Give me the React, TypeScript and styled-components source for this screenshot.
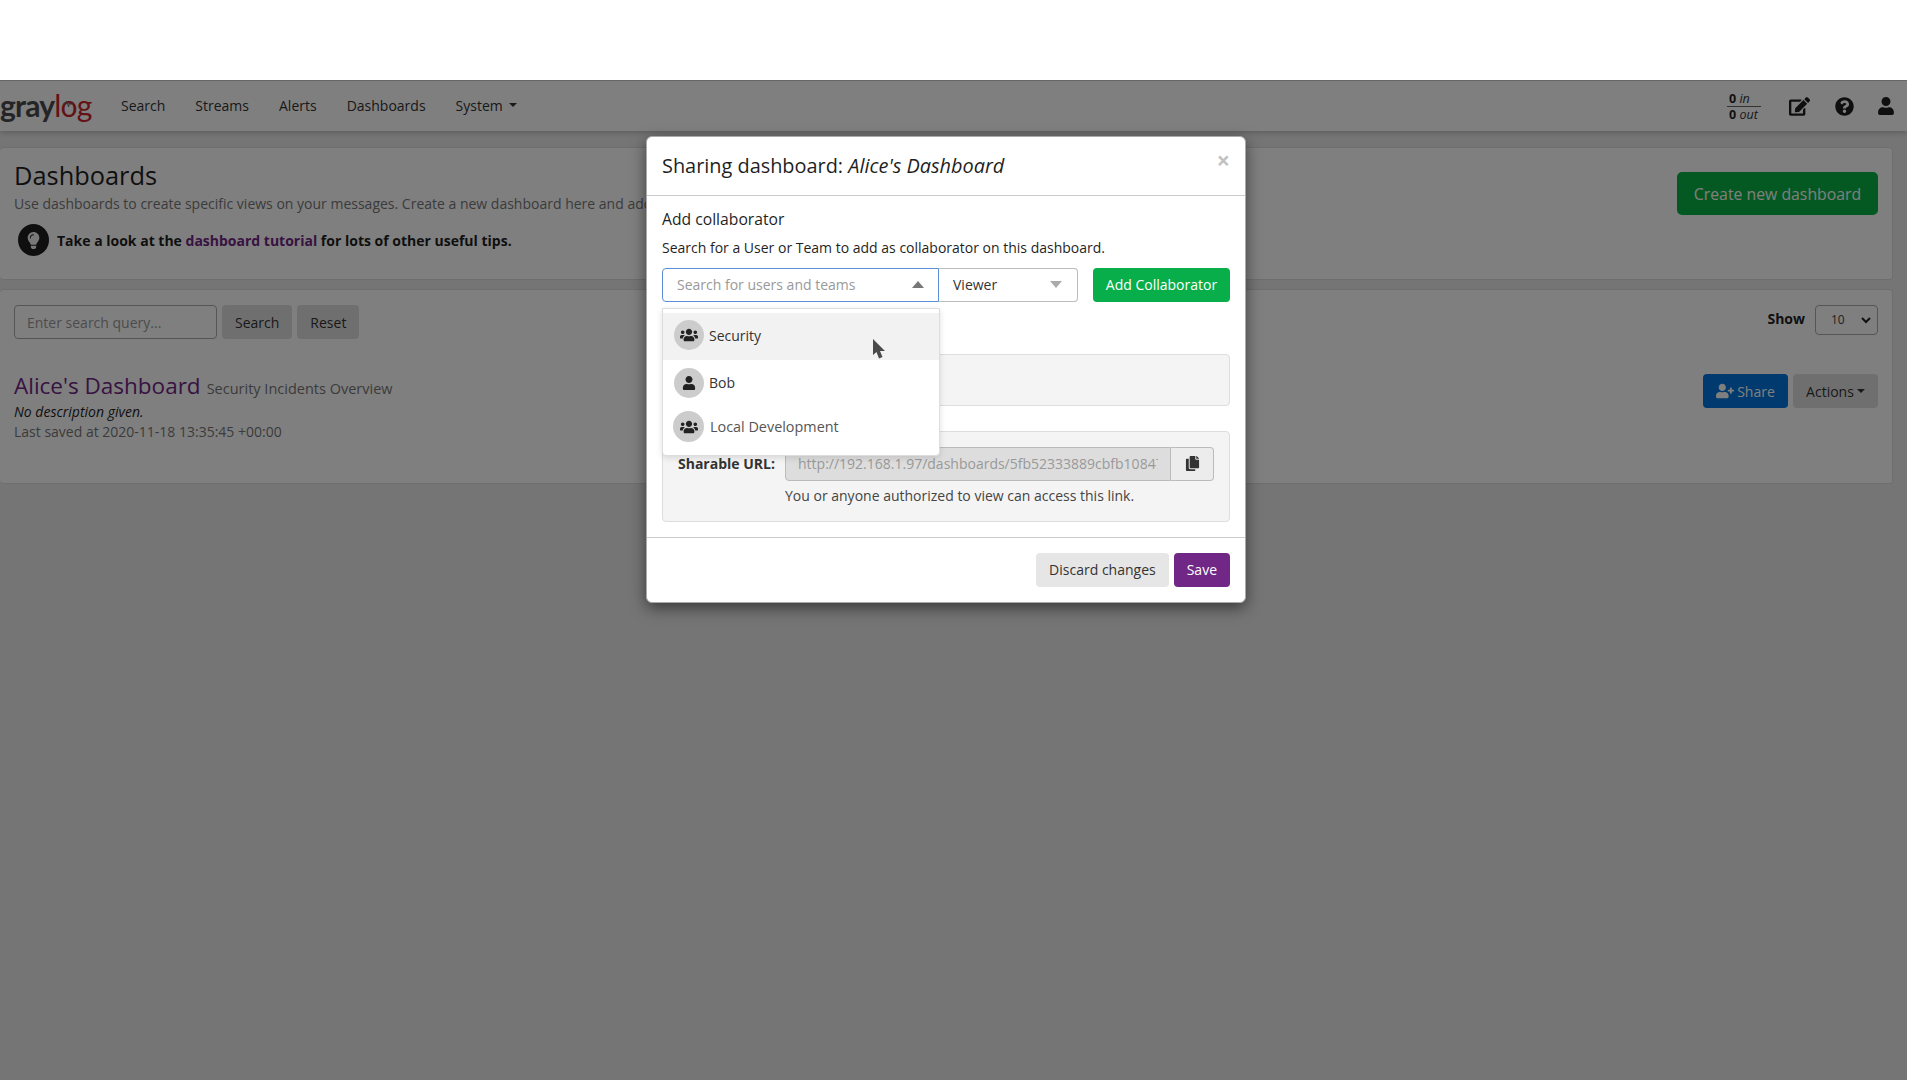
import React from "react";
import styled, { createGlobalStyle } from "styled-components";
import {
  FaCopy,
  FaEdit,
  FaLightbulb,
  FaQuestionCircle,
  FaUser,
  FaUserPlus,
  FaUsers,
} from "react-icons/fa";

const GlobalStyle = createGlobalStyle`
  html, body {
    margin: 0;
    padding: 0;
    background: #fff;
    overflow: hidden;
  }
  body {
    font-family: "Open Sans", "Liberation Sans", sans-serif;
    font-size: 14px;
    color: #1f1f1f;
  }
  * {
    box-sizing: border-box;
  }
`;

const Screen = styled.div`
  width: 1920px;
  height: 1080px;
  padding-top: 80px;
  background: #fff;
`;

const Frame = styled.div`
  position: relative;
  width: 1907px;
  height: 1000px;
  overflow: hidden;
  background: #ebebeb;
`;

const Navbar = styled.nav`
  height: 51px;
  display: flex;
  align-items: center;
  background: #fff;
  border-top: 1px solid #ccc;
  box-shadow: 0 2px 5px rgba(0, 0, 0, 0.2);
  color: #333;
`;

const Logo = styled.div`
  position: relative;
  width: 121px;
  padding-bottom: 2px;
  font-family: "Lato", sans-serif;
  font-size: 30px;
  line-height: 30px;
  letter-spacing: -0.8px;
  font-weight: 700;
  color: #4a4a4a;

  span {
    font-weight: 400;
    color: #c9252c;
  }
`;

const LogoWave = styled.svg`
  position: absolute;
  top: 9px;
  left: 63px;
`;

const NavLinks = styled.div`
  display: flex;
  gap: 30px;
  padding-bottom: 2px;
`;

const NavLink = styled.a`
  display: flex;
  align-items: center;
  gap: 6px;
`;

const Caret = styled.i`
  width: 0;
  height: 0;
  border-top: 4px solid currentColor;
  border-left: 4px solid transparent;
  border-right: 4px solid transparent;
`;

const NavRight = styled.div`
  margin-left: auto;
  display: flex;
  align-items: center;
  padding-right: 12px;
  color: #1f1f1f;
`;

const Throughput = styled.div`
  width: 34px;
  margin-right: 28px;
  font-size: 12.5px;
  line-height: 15px;
  padding-left: 2px;

  b {
    font-weight: 700;
  }
  em {
    color: #333;
  }
  div + div {
    border-top: 1px solid #666;
    margin-left: -2px;
    padding-left: 2px;
  }
`;

const NavIcon = styled.span<{ $gap: number; $size: number }>`
  display: flex;
  margin-right: ${({ $gap }) => $gap}px;
  font-size: ${({ $size }) => $size}px;
`;

const Content = styled.main`
  padding: 16px 14px 0 0;
  display: flex;
  flex-direction: column;
  gap: 9px;
`;

const Panel = styled.section<{ $height: number }>`
  height: ${({ $height }) => $height}px;
  padding: 0 14px;
  background: #fff;
  border: 1px solid #ddd;
  border-left: 0;
  border-radius: 4px;
`;

const HeaderRow = styled.div`
  display: flex;
  justify-content: space-between;
`;

const Title = styled.h1`
  margin: 10px 0 0;
  font-size: 25.4px;
  line-height: 34px;
  font-weight: 400;
`;

const Lead = styled.p`
  margin: 2px 0 0;
  line-height: 19px;
  color: #777;
`;

const Tip = styled.div`
  margin: 11px 0 0 4px;
  display: flex;
  align-items: center;
  gap: 8px;
  font-weight: 700;

  a {
    color: #702785;
  }
`;

const TipBadge = styled.span`
  width: 31px;
  height: 32px;
  display: flex;
  align-items: center;
  justify-content: center;
  border-radius: 50%;
  background: #1f1f1f;
  color: #f0f0f0;
  font-size: 17px;
`;

const CreateButton = styled.button`
  margin-top: 24px;
  width: 201px;
  height: 43px;
  border: 0;
  border-radius: 5px;
  background: #07b343;
  color: #fff;
  font: 400 15.8px "Open Sans", sans-serif;
`;

const SearchRow = styled.div`
  padding-top: 15px;
  display: flex;
  justify-content: space-between;
`;

const SearchForm = styled.div`
  display: flex;
  gap: 5px;
`;

const SearchInput = styled.div`
  width: 203px;
  height: 34px;
  padding-left: 12px;
  display: flex;
  align-items: center;
  border: 1px solid #aaa;
  border-radius: 4px;
  color: #999;
`;

const Button = styled.button<{ $kind?: "default" | "light" | "primary" | "blue" | "green" }>`
  height: 34px;
  padding: 0 13px;
  display: inline-flex;
  align-items: center;
  justify-content: center;
  gap: 5px;
  border: 0;
  border-radius: 4px;
  font: 400 14px "Open Sans", sans-serif;
  white-space: nowrap;
  color: ${({ $kind }) => ($kind && $kind !== "default" && $kind !== "light" ? "#fff" : "#333")};
  background: ${({ $kind }) =>
    $kind === "primary"
      ? "#702785"
      : $kind === "blue"
        ? "#0074dc"
        : $kind === "green"
          ? "#07ae4a"
          : $kind === "light"
            ? "#e6e6e6"
            : "#dfdfdf"};
`;

const ShareButton = styled(Button)`
  width: 85px;
  padding: 0;
  gap: 3px;

  svg {
    font-size: 18px;
  }
`;

const ActionsButton = styled(Button)`
  width: 85px;
  padding: 0;
  gap: 3px;
`;

const ShowControl = styled.div`
  display: flex;
  align-items: flex-start;
  gap: 10px;
  font-weight: 700;
  line-height: 28px;
`;

const PageSize = styled.div`
  width: 63px;
  height: 30px;
  padding: 0 6px 0 15px;
  display: flex;
  align-items: center;
  justify-content: space-between;
  border: 1px solid #aaa;
  border-radius: 4px;
  font-size: 12px;
  font-weight: 400;
  color: #444;

  svg {
    width: 10px;
    height: 10px;
  }
`;

const DashboardRow = styled.div`
  margin-top: 35px;
  display: flex;
  justify-content: space-between;
`;

const DashboardInfo = styled.div`
  margin-top: -3px;
`;

const DashboardTitle = styled.div`
  display: flex;
  align-items: baseline;
  gap: 6px;
  height: 31px;
  line-height: 30px;
  font-size: 14.5px;
  color: #777;

  a {
    font-size: 22.5px;
    color: #702785;
  }
`;

const Description = styled.div`
  line-height: 20px;
  font-style: italic;
`;

const Saved = styled.div`
  line-height: 20px;
  color: #777;
`;

const RowActions = styled.div`
  display: flex;
  gap: 5px;
`;

const Backdrop = styled.div`
  position: absolute;
  inset: 0;
  background: rgba(0, 0, 0, 0.5);
`;

const Modal = styled.div`
  position: absolute;
  top: 56px;
  left: 646px;
  width: 600px;
  height: 467px;
  display: flex;
  flex-direction: column;
  background: #fff;
  border: 1px solid #aaa;
  border-radius: 6px;
  box-shadow: 0 5px 15px rgba(0, 0, 0, 0.5);
`;

const ModalHeader = styled.header`
  height: 60px;
  padding: 0 15px;
  display: flex;
  justify-content: space-between;
  border-bottom: 1px solid #ccc;
`;

const ModalTitle = styled.h2`
  margin: 15px 0 0;
  font-size: 19.9px;
  line-height: 28px;
  font-weight: 400;

  em {
    font-style: italic;
  }
`;

const Close = styled.span`
  margin: 10px 0 0 0;
  font-size: 23px;
  line-height: 26px;
  font-weight: 700;
  color: #c2c2c2;
`;

const ModalBody = styled.div`
  position: relative;
  flex: 1;
  padding: 12px 15px 0;
  display: flex;
  flex-direction: column;
`;

const SectionTitle = styled.div`
  font-size: 15.7px;
  line-height: 22px;
`;

const SectionText = styled.div`
  margin-top: 8px;
  line-height: 20px;
`;

const SelectionRow = styled.div`
  margin-top: 10px;
  display: flex;
`;

const SelectBox = styled.div<{ $focused?: boolean; $width: number }>`
  width: ${({ $width }) => $width}px;
  height: 34px;
  padding: 0 14px;
  display: flex;
  align-items: center;
  justify-content: space-between;
  border: 1px solid ${({ $focused }) => ($focused ? "#5b8fd6" : "#bbb")};
  border-left-width: ${({ $focused }) => ($focused ? 1 : 0)}px;
  border-radius: ${({ $focused }) => ($focused ? "4px 0 0 4px" : "0 4px 4px 0")};
  color: ${({ $focused }) => ($focused ? "#999" : "#333")};
`;

const SelectCaret = styled.i<{ $up?: boolean }>`
  width: 0;
  height: 0;
  margin-right: ${({ $up }) => ($up ? 0 : 1)}px;
  border-left: 6px solid transparent;
  border-right: 6px solid transparent;
  border-top: ${({ $up }) => ($up ? "0" : "7px solid #aaa")};
  border-bottom: ${({ $up }) => ($up ? "7px solid #777" : "0")};
`;

const AddButton = styled(Button)`
  margin-left: 15px;
  width: 137px;
  padding: 0;
`;

const Well = styled.div<{ $height: number; $top: number }>`
  height: ${({ $height }) => $height}px;
  margin-top: ${({ $top }) => $top}px;
  background: #f4f4f4;
  border: 1px solid #ddd;
  border-radius: 4px;
`;

const UrlRow = styled.div`
  padding: 15px 13px 0 15px;
  display: flex;
  align-items: center;
`;

const UrlLabel = styled.label`
  width: 107px;
  font-weight: 700;
  color: #333;
`;

const UrlInput = styled.div`
  width: 386px;
  height: 34px;
  padding: 0 12px;
  display: flex;
  align-items: center;
  background: #ddd;
  border: 1px solid #bbb;
  border-radius: 4px 0 0 4px;
  color: #999;
`;

const UrlValue = styled.span`
  flex: 1;
  overflow: hidden;
  white-space: nowrap;
`;

const CopyButton = styled.span`
  width: 43px;
  height: 34px;
  display: flex;
  align-items: center;
  justify-content: center;
  background: #ececec;
  border: 1px solid #bbb;
  border-left: 0;
  border-radius: 0 4px 4px 0;
  color: #333;
  font-size: 15px;
`;

const UrlHelp = styled.div`
  margin: 5px 0 0 122px;
  line-height: 20px;
  color: #444;
`;

const ModalFooter = styled.footer`
  margin-top: 15px;
  padding: 15px 15px 0;
  height: 66px;
  display: flex;
  justify-content: flex-end;
  gap: 5px;
  border-top: 1px solid #ccc;
`;

const Dropdown = styled.div`
  position: absolute;
  top: 112px;
  left: 15px;
  width: 278px;
  height: 148px;
  padding-top: 4px;
  background: #fff;
  border: 1px solid #ddd;
  border-radius: 0 0 4px 4px;
  box-shadow: 0 2px 6px rgba(0, 0, 0, 0.12);
`;

const Option = styled.div<{ $active?: boolean; $height: number; $faded?: boolean }>`
  height: ${({ $height }) => $height}px;
  padding-left: ${({ $faded }) => ($faded ? 10 : 11)}px;
  padding-bottom: ${({ $active }) => ($active ? 2 : 0)}px;
  display: flex;
  align-items: center;
  gap: ${({ $faded }) => ($faded ? 6 : 5)}px;
  background: ${({ $active }) => ($active ? "#f2f2f2" : "#fff")};
  color: ${({ $faded }) => ($faded ? "#555" : "#333")};
  font-size: ${({ $faded }) => ($faded ? 14.4 : 14)}px;
`;

const Avatar = styled.span<{ $team: boolean; $faded?: boolean }>`
  width: ${({ $faded }) => ($faded ? 31 : 30)}px;
  height: ${({ $faded }) => ($faded ? 31 : 30)}px;
  display: flex;
  align-items: center;
  justify-content: center;
  border-radius: 50%;
  background: #ccc;
  color: #222;
  font-size: ${({ $team }) => ($team ? 18 : 14)}px;
`;

const Cursor = styled.svg`
  position: absolute;
  top: 143px;
  left: 226px;
`;

const options = [
  { name: "Security", team: true, height: 47, active: true, faded: false },
  { name: "Bob", team: false, height: 46, active: false, faded: false },
  { name: "Local Development", team: true, height: 42, active: false, faded: true },
];

const App = () => {
  return (
    <Screen>
      <GlobalStyle />
      <Frame>
        <Navbar>
          <Logo>
            gray<span>log</span>
            <LogoWave width="10" height="10" viewBox="0 0 10 10">
              <path d="M0 5h3l1-3 1.500 6 1-4 .5 1h2.500" fill="none" stroke="#666" strokeWidth="1" />
            </LogoWave>
          </Logo>
          <NavLinks>
            <NavLink>Search</NavLink>
            <NavLink>Streams</NavLink>
            <NavLink>Alerts</NavLink>
            <NavLink>Dashboards</NavLink>
            <NavLink>
              System <Caret />
            </NavLink>
          </NavLinks>
          <NavRight>
            <Throughput>
              <div>
                <b>0</b> <em>in</em>
              </div>
              <div>
                <b>0</b> <em>out</em>
              </div>
            </Throughput>
            <NavIcon $gap={25} $size={21}>
              <FaEdit />
            </NavIcon>
            <NavIcon $gap={23} $size={19}>
              <FaQuestionCircle />
            </NavIcon>
            <NavIcon $gap={0} $size={18}>
              <FaUser />
            </NavIcon>
          </NavRight>
        </Navbar>

        <Content>
          <Panel $height={133}>
            <HeaderRow>
              <div>
                <Title>Dashboards</Title>
                <Lead>
                  Use dashboards to create specific views on your messages. Create a new dashboard
                  here and add
                </Lead>
                <Tip>
                  <TipBadge>
                    <FaLightbulb />
                  </TipBadge>
                  <span>
                    Take a look at the <a>dashboard tutorial</a> for lots of other useful tips.
                  </span>
                </Tip>
              </div>
              <CreateButton>Create new dashboard</CreateButton>
            </HeaderRow>
          </Panel>

          <Panel $height={195}>
            <SearchRow>
              <SearchForm>
                <SearchInput>Enter search query...</SearchInput>
                <Button>Search</Button>
                <Button>Reset</Button>
              </SearchForm>
              <ShowControl>
                Show
                <PageSize>
                  10
                  <svg viewBox="0 0 10 10">
                    <path d="M1 3l4 4 4-4" fill="none" stroke="#222" strokeWidth="2" />
                  </svg>
                </PageSize>
              </ShowControl>
            </SearchRow>
            <DashboardRow>
              <DashboardInfo>
                <DashboardTitle>
                  <a>Alice's Dashboard</a>
                  <span>Security Incidents Overview</span>
                </DashboardTitle>
                <Description>No description given.</Description>
                <Saved>Last saved at 2020-11-18 13:35:45 +00:00</Saved>
              </DashboardInfo>
              <RowActions>
                <ShareButton $kind="blue">
                  <FaUserPlus />
                  Share
                </ShareButton>
                <ActionsButton>
                  Actions <Caret />
                </ActionsButton>
              </RowActions>
            </DashboardRow>
          </Panel>
        </Content>

        <Backdrop />

        <Modal>
          <ModalHeader>
            <ModalTitle>
              Sharing dashboard: <em>Alice's Dashboard</em>
            </ModalTitle>
            <Close>×</Close>
          </ModalHeader>
          <ModalBody>
            <SectionTitle>Add collaborator</SectionTitle>
            <SectionText>Search for a User or Team to add as collaborator on this dashboard.</SectionText>
            <SelectionRow>
              <SelectBox $focused $width={277}>
                Search for users and teams
                <SelectCaret $up />
              </SelectBox>
              <SelectBox $width={139}>
                Viewer
                <SelectCaret />
              </SelectBox>
              <AddButton $kind="green">Add Collaborator</AddButton>
            </SelectionRow>
            <Well $height={52} $top={52} />
            <Well $height={91} $top={25}>
              <UrlRow>
                <UrlLabel>Sharable URL:</UrlLabel>
                <UrlInput>
                  <UrlValue>http://192.168.1.97/dashboards/5fb52333889cbfb10847</UrlValue>
                </UrlInput>
                <CopyButton>
                  <FaCopy />
                </CopyButton>
              </UrlRow>
              <UrlHelp>You or anyone authorized to view can access this link.</UrlHelp>
            </Well>
            <Dropdown>
              {options.map((option) => (
                <Option
                  key={option.name}
                  $active={option.active}
                  $height={option.height}
                  $faded={option.faded}
                >
                  <Avatar $team={option.team} $faded={option.faded}>
                    {option.team ? <FaUsers /> : <FaUser />}
                  </Avatar>
                  {option.name}
                </Option>
              ))}
            </Dropdown>
            <Cursor width="12" height="21" viewBox="0 0 12 21">
              <path d="M0 0v16l3.500-3 2.500 6.500 3.500-1.500-2.500-6H12z" fill="#4a4a4a" />
            </Cursor>
          </ModalBody>
          <ModalFooter>
            <Button $kind="light">Discard changes</Button>
            <Button $kind="primary">Save</Button>
          </ModalFooter>
        </Modal>
      </Frame>
    </Screen>
  );
};

export default App;
